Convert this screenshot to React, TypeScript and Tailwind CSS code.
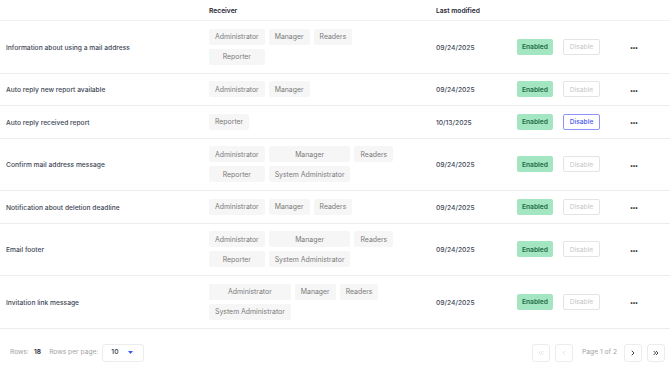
import React from "react";
import { ChevronLeft, ChevronRight, ChevronsLeft, ChevronsRight } from "lucide-react";

type Row = {
    name: string;
    receivers: string[];
    date: string;
    focused?: boolean;
};

const full = ["Administrator", "Manager", "Readers", "Reporter", "System Administrator"];

const rows: Row[] = [
    { name: "Information about using a mail address", receivers: ["Administrator", "Manager", "Readers", "Reporter"], date: "09/24/2025" },
    { name: "Auto reply new report available", receivers: ["Administrator", "Manager"], date: "09/24/2025" },
    { name: "Auto reply received report", receivers: ["Reporter"], date: "10/13/2025", focused: true },
    { name: "Confirm mail address message", receivers: full, date: "09/24/2025" },
    { name: "Notification about deletion deadline", receivers: ["Administrator", "Manager", "Readers"], date: "09/24/2025" },
    { name: "Email footer", receivers: full, date: "09/24/2025" },
    { name: "Invitation link message", receivers: ["Administrator", "Manager", "Readers", "System Administrator"], date: "09/24/2025" },
];

const PageButton = ({ children, disabled }: { children: React.ReactNode; disabled?: boolean }) => (
    <button
        className={`w-[18px] h-[18px] flex items-center justify-center rounded-[3px] border border-[#ececec] bg-white ${
            disabled ? "text-[#c9c9c9]" : "text-[#1f1f1f]"
        }`}
    >
        {children}
    </button>
);

const App = () => {
    return (
        <div className="w-[670px] h-[371px] bg-white overflow-hidden font-['Inter',sans-serif] text-[6.7px]">
            {/* header */}
            <div className="flex items-center h-[21px] pt-[3px] border-b border-[#f0f0f0] font-semibold text-[#1f2433]">
                <div className="w-[209px]" />
                <div className="w-[227px]">Receiver</div>
                <div>Last modified</div>
            </div>

            {rows.map((row, i) => (
                <div key={i} className="flex items-center border-b border-[#ececec] py-[7.75px]">
                    <div className="w-[209px] pl-1.5 pt-[2px] font-medium text-[#414857]">{row.name}</div>
                    <div className="w-[227px]">
                        <div className="grid grid-cols-[repeat(3,auto)] w-fit gap-1">
                            {row.receivers.map((r, j) => (
                                <span
                                    key={j}
                                    className="h-4 flex items-center justify-center px-[6px] pt-[1px] rounded-[2px] bg-[#f6f6f6] text-[#7a7a7a] text-[6.9px] whitespace-nowrap"
                                >
                                    {r}
                                </span>
                            ))}
                        </div>
                    </div>
                    <div className="w-[81px] pt-[2px] font-medium text-[#414857]">{row.date}</div>
                    <div className="w-[113px] flex gap-[10px]">
                        <button className="w-[36px] h-4 pt-[1px] rounded-[2px] bg-[#a3e6c1] text-[#1d6a45] font-semibold">
                            Enabled
                        </button>
                        <button
                            className={`w-[37px] h-4 pt-[1px] rounded-[2px] bg-white border ${
                                row.focused
                                    ? "border-[#8b96f7] text-[#4a5af0] font-medium"
                                    : "border-[#e4e4e4] text-[#c6c6c6]"
                            }`}
                        >
                            Disable
                        </button>
                    </div>
                    <div className="pt-[2px] text-[#222] font-semibold text-[6px] tracking-[-0.5px]">•••</div>
                </div>
            ))}

            {/* footer */}
            <div className="flex items-center justify-between h-[48px] pl-[10px] pr-[5px]">
                <div className="flex items-center">
                    <span className="text-[#a3a3a3]">Rows:</span>
                    <span className="ml-[5px] font-semibold text-[#2b3140]">18</span>
                    <span className="ml-[8px] text-[#a3a3a3]">Rows per page:</span>
                    <div className="ml-[4px] w-[42px] h-[18px] flex items-center justify-between pl-[8px] pr-[10px] rounded-[3px] border border-[#ececec] text-[#2b3140] font-medium">
                        <span>10</span>
                        <svg width="5" height="3" viewBox="0 0 5 3">
                            <path d="M0 0 L5 0 L2.5 3 Z" fill="#3b5bf0" />
                        </svg>
                    </div>
                </div>
                <div className="flex items-center">
                    <PageButton disabled>
                        <ChevronsLeft size={8} strokeWidth={1.5} />
                    </PageButton>
                    <div className="ml-[5px]">
                        <PageButton disabled>
                            <ChevronLeft size={8} strokeWidth={1.5} />
                        </PageButton>
                    </div>
                    <span className="ml-[9px] mr-[7px] text-[#a3a3a3]">Page 1 of 2</span>
                    <PageButton>
                        <ChevronRight size={8} strokeWidth={2.5} />
                    </PageButton>
                    <div className="ml-[5px]">
                        <PageButton>
                            <ChevronsRight size={8} strokeWidth={2.5} />
                        </PageButton>
                    </div>
                </div>
            </div>
        </div>
    );
};

export default App;
